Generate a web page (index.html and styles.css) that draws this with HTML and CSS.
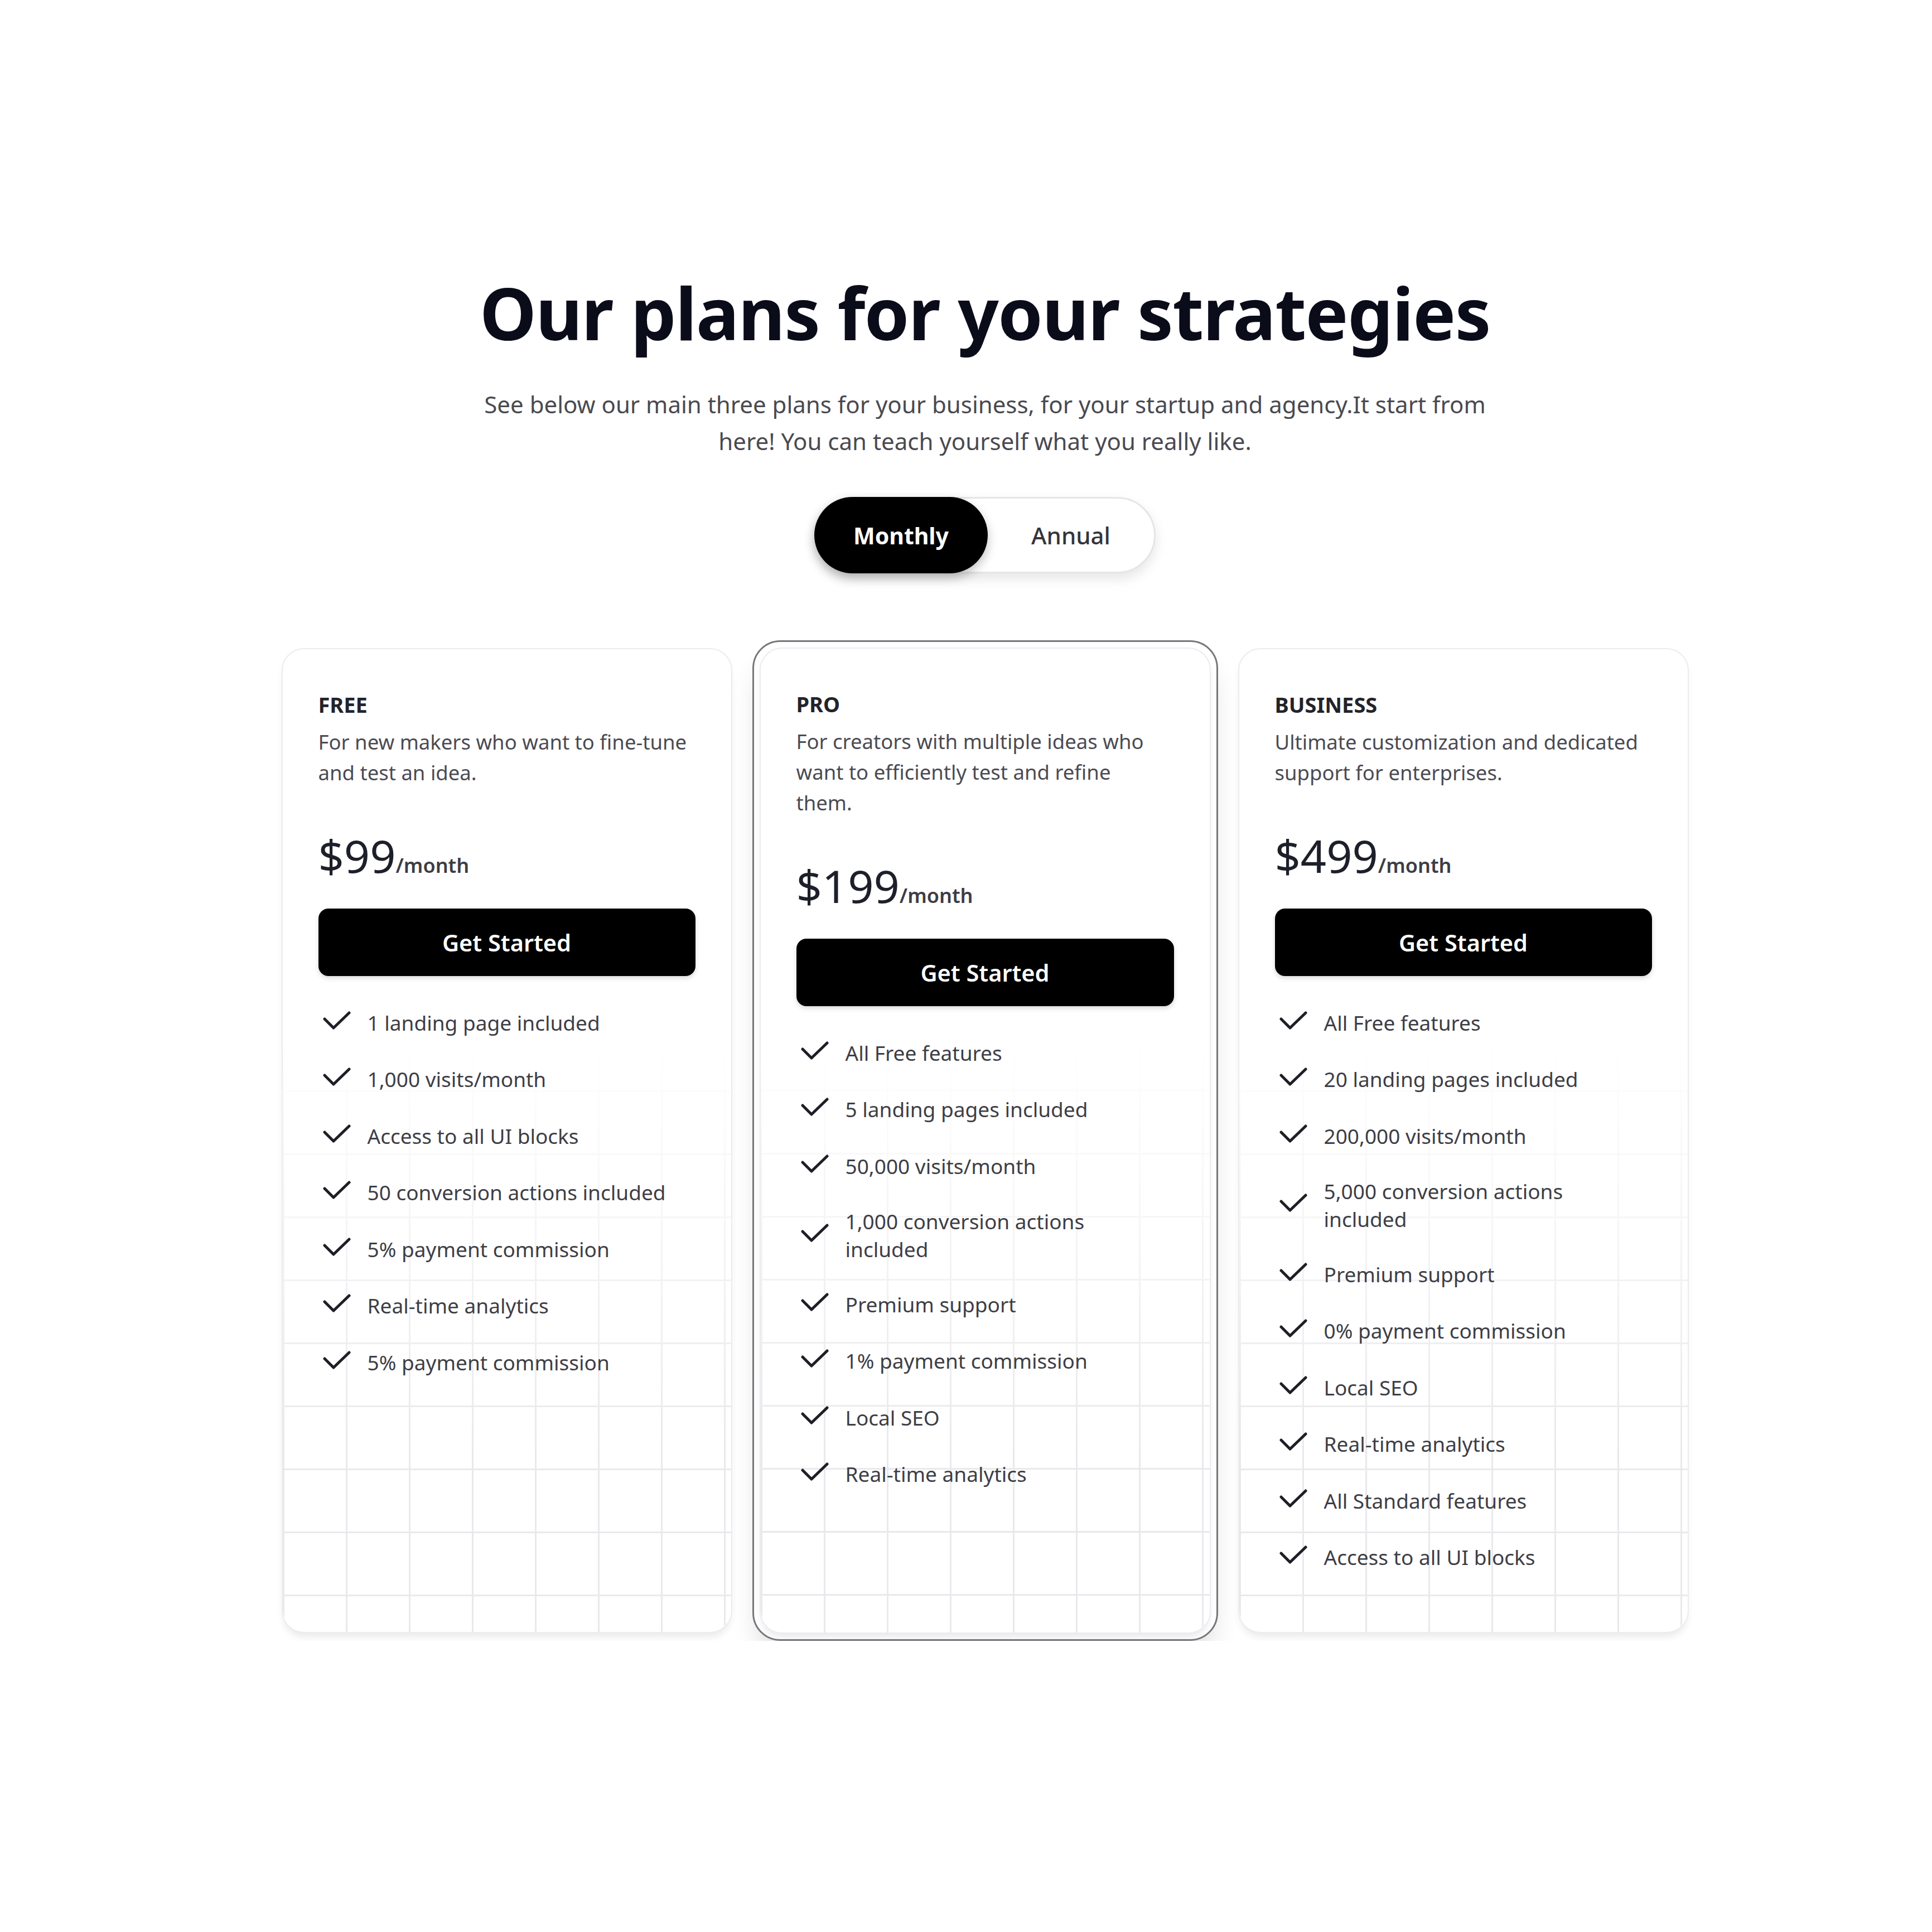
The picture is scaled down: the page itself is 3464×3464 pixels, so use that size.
FILE: index.html
```html
<!DOCTYPE html>
<html lang="en">
<head>
<meta charset="utf-8">
<title>Pricing plans</title>
<link rel="stylesheet" href="styles.css">
</head>
<body>
<main class="page">
  <section class="pricing">
    <header class="intro">
      <h1 class="title">Our plans for your strategies</h1>
      <p class="subtitle">See below our main three plans for your business, for your startup and agency.It start from here! You can teach yourself what you really like.</p>
      <div class="toggle">
        <button class="toggle-opt is-active" type="button">Monthly</button>
        <button class="toggle-opt" type="button">Annual</button>
      </div>
    </header>

    <div class="plans">
      <article class="card card--side">
        <h2 class="plan-name">FREE</h2>
        <p class="plan-desc">For new makers who want to fine-tune and test an idea.</p>
        <div class="price"><span class="amount">$99</span><span class="period">/month</span></div>
        <a class="cta" href="#">Get Started</a>
        <ul class="features">
          <li><svg class="check" viewBox="0 0 50 34"><path d="M3 14 L19 30 L47 3"/></svg><span>1 landing page included</span></li>
          <li><svg class="check" viewBox="0 0 50 34"><path d="M3 14 L19 30 L47 3"/></svg><span>1,000 visits/month</span></li>
          <li><svg class="check" viewBox="0 0 50 34"><path d="M3 14 L19 30 L47 3"/></svg><span>Access to all UI blocks</span></li>
          <li><svg class="check" viewBox="0 0 50 34"><path d="M3 14 L19 30 L47 3"/></svg><span>50 conversion actions included</span></li>
          <li><svg class="check" viewBox="0 0 50 34"><path d="M3 14 L19 30 L47 3"/></svg><span>5% payment commission</span></li>
          <li><svg class="check" viewBox="0 0 50 34"><path d="M3 14 L19 30 L47 3"/></svg><span>Real-time analytics</span></li>
          <li><svg class="check" viewBox="0 0 50 34"><path d="M3 14 L19 30 L47 3"/></svg><span>5% payment commission</span></li>
        </ul>
      </article>

      <div class="featured">
        <article class="card">
          <h2 class="plan-name">PRO</h2>
          <p class="plan-desc plan-desc--narrow">For creators with multiple ideas who want to efficiently test and refine them.</p>
          <div class="price"><span class="amount">$199</span><span class="period">/month</span></div>
          <a class="cta" href="#">Get Started</a>
          <ul class="features">
            <li><svg class="check" viewBox="0 0 50 34"><path d="M3 14 L19 30 L47 3"/></svg><span>All Free features</span></li>
            <li><svg class="check" viewBox="0 0 50 34"><path d="M3 14 L19 30 L47 3"/></svg><span>5 landing pages included</span></li>
            <li><svg class="check" viewBox="0 0 50 34"><path d="M3 14 L19 30 L47 3"/></svg><span>50,000 visits/month</span></li>
            <li><svg class="check" viewBox="0 0 50 34"><path d="M3 14 L19 30 L47 3"/></svg><span>1,000 conversion actions included</span></li>
            <li><svg class="check" viewBox="0 0 50 34"><path d="M3 14 L19 30 L47 3"/></svg><span>Premium support</span></li>
            <li><svg class="check" viewBox="0 0 50 34"><path d="M3 14 L19 30 L47 3"/></svg><span>1% payment commission</span></li>
            <li><svg class="check" viewBox="0 0 50 34"><path d="M3 14 L19 30 L47 3"/></svg><span>Local SEO</span></li>
            <li><svg class="check" viewBox="0 0 50 34"><path d="M3 14 L19 30 L47 3"/></svg><span>Real-time analytics</span></li>
          </ul>
        </article>
      </div>

      <article class="card card--side">
        <h2 class="plan-name">BUSINESS</h2>
        <p class="plan-desc">Ultimate customization and dedicated support for enterprises.</p>
        <div class="price"><span class="amount">$499</span><span class="period">/month</span></div>
        <a class="cta" href="#">Get Started</a>
        <ul class="features">
          <li><svg class="check" viewBox="0 0 50 34"><path d="M3 14 L19 30 L47 3"/></svg><span>All Free features</span></li>
          <li><svg class="check" viewBox="0 0 50 34"><path d="M3 14 L19 30 L47 3"/></svg><span>20 landing pages included</span></li>
          <li><svg class="check" viewBox="0 0 50 34"><path d="M3 14 L19 30 L47 3"/></svg><span>200,000 visits/month</span></li>
          <li><svg class="check" viewBox="0 0 50 34"><path d="M3 14 L19 30 L47 3"/></svg><span>5,000 conversion actions included</span></li>
          <li><svg class="check" viewBox="0 0 50 34"><path d="M3 14 L19 30 L47 3"/></svg><span>Premium support</span></li>
          <li><svg class="check" viewBox="0 0 50 34"><path d="M3 14 L19 30 L47 3"/></svg><span>0% payment commission</span></li>
          <li><svg class="check" viewBox="0 0 50 34"><path d="M3 14 L19 30 L47 3"/></svg><span>Local SEO</span></li>
          <li><svg class="check" viewBox="0 0 50 34"><path d="M3 14 L19 30 L47 3"/></svg><span>Real-time analytics</span></li>
          <li><svg class="check" viewBox="0 0 50 34"><path d="M3 14 L19 30 L47 3"/></svg><span>All Standard features</span></li>
          <li><svg class="check" viewBox="0 0 50 34"><path d="M3 14 L19 30 L47 3"/></svg><span>Access to all UI blocks</span></li>
        </ul>
      </article>
    </div>
  </section>
</main>
</body>
</html>
```

FILE: styles.css
```css
* { box-sizing: border-box; }

html, body {
  margin: 0;
  padding: 0;
  background: #ffffff;
}

body {
  font-family: "Noto Sans", "Open Sans", sans-serif;
  color: #1f1f24;
}

.page {
  padding: 480px 0 0 68px;
}

.pricing {
  display: flex;
  flex-direction: column;
  align-items: center;
}

.intro {
  display: flex;
  flex-direction: column;
  align-items: center;
  text-align: center;
}

.title {
  margin: 0;
  font-size: 129px;
  line-height: 161px;
  font-weight: 700;
  color: #0b0c1a;
  letter-spacing: -1.5px;
}

.subtitle {
  margin: 51px 0 0;
  max-width: 1850px;
  font-size: 42px;
  line-height: 66px;
  color: #4a4a50;
}

.toggle {
  margin-top: 67px;
  width: 612px;
  height: 137px;
  display: flex;
  border: 3px solid #e6e6e8;
  border-radius: 70px;
  background: #fff;
  box-shadow: 0 10px 22px rgba(0, 0, 0, 0.10);
}

.toggle-opt {
  flex: 1 1 0;
  border: 0;
  background: transparent;
  font-family: inherit;
  font-size: 42px;
  font-weight: 500;
  color: #35353a;
  border-radius: 70px;
  padding: 0;
}

.toggle-opt.is-active {
  flex: 0 0 311px;
  margin: -3px 0 -3px -3px;
  background: #000;
  color: #fff;
  font-weight: 700;
  font-size: 41px;
  box-shadow: 0 8px 18px rgba(0, 0, 0, 0.25);
}

.plans {
  margin-top: 120px;
  display: flex;
  align-items: stretch;
  gap: 36px;
}

.card {
  position: relative;
  width: 808px;
  padding: 73px 64px 106px;
  border: 2px solid #ececef;
  border-radius: 40px;
  background: #fff;
  box-shadow: 0 10px 14px -4px rgba(30, 30, 60, 0.10);
  display: flex;
  flex-direction: column;
}

.card--side {
  margin: 14px 0;
}

.card::before {
  content: "";
  position: absolute;
  inset: 0;
  border-radius: inherit;
  background-image:
    linear-gradient(to right, #e9e9ed 3px, transparent 3px),
    linear-gradient(to bottom, #e9e9ed 3px, transparent 3px);
  background-size: 113px 113px;
  -webkit-mask-image: linear-gradient(to bottom, transparent 40%, #000 82%);
  mask-image: linear-gradient(to bottom, transparent 40%, #000 82%);
  pointer-events: none;
}

.card > * {
  position: relative;
}

.featured {
  flex: 0 0 835px;
  padding: 10px;
  border: 3px solid #76767c;
  border-radius: 50px;
  display: flex;
  flex-direction: column;
  box-shadow: 0 34px 50px -14px rgba(0, 0, 0, 0.16);
}

.featured .card {
  flex: 1 1 auto;
  width: auto;
}

.plan-name {
  margin: 0;
  font-size: 38px;
  line-height: 52px;
  font-weight: 700;
  color: #23232a;
}

.plan-desc {
  margin: 14px 0 0;
  font-size: 36.5px;
  line-height: 55px;
  color: #4b4b52;
}

.plan-desc--narrow {
  max-width: 645px;
}

.price {
  margin-top: 76px;
  display: flex;
  align-items: baseline;
}

.amount {
  font-size: 81px;
  line-height: 90px;
  font-weight: 400;
  color: #1d1f2a;
}

.period {
  font-size: 36px;
  line-height: 1;
  font-weight: 600;
  color: #3d3d45;
}

.cta {
  margin-top: 50px;
  height: 121px;
  display: flex;
  align-items: center;
  justify-content: center;
  background: #000;
  border-radius: 18px;
  color: #fff;
  font-size: 41.5px;
  font-weight: 600;
  text-decoration: none;
  box-shadow: 0 4px 8px rgba(0, 0, 0, 0.15);
}

.features {
  list-style: none;
  margin: 56px 0 0;
  padding: 0;
  display: flex;
  flex-direction: column;
  gap: 46.5px;
}

.features li {
  display: flex;
  align-items: center;
  gap: 30px;
  min-height: 55px;
  font-size: 37px;
  line-height: 50px;
  color: #3e3e45;
}

.features li span {
  max-width: 560px;
}

.check {
  flex: 0 0 50px;
  width: 50px;
  height: 34px;
  margin-left: 8px;
  margin-top: -8px;
  fill: none;
  stroke: #1e1f26;
  stroke-width: 5;
  stroke-linecap: round;
  stroke-linejoin: round;
}
```
